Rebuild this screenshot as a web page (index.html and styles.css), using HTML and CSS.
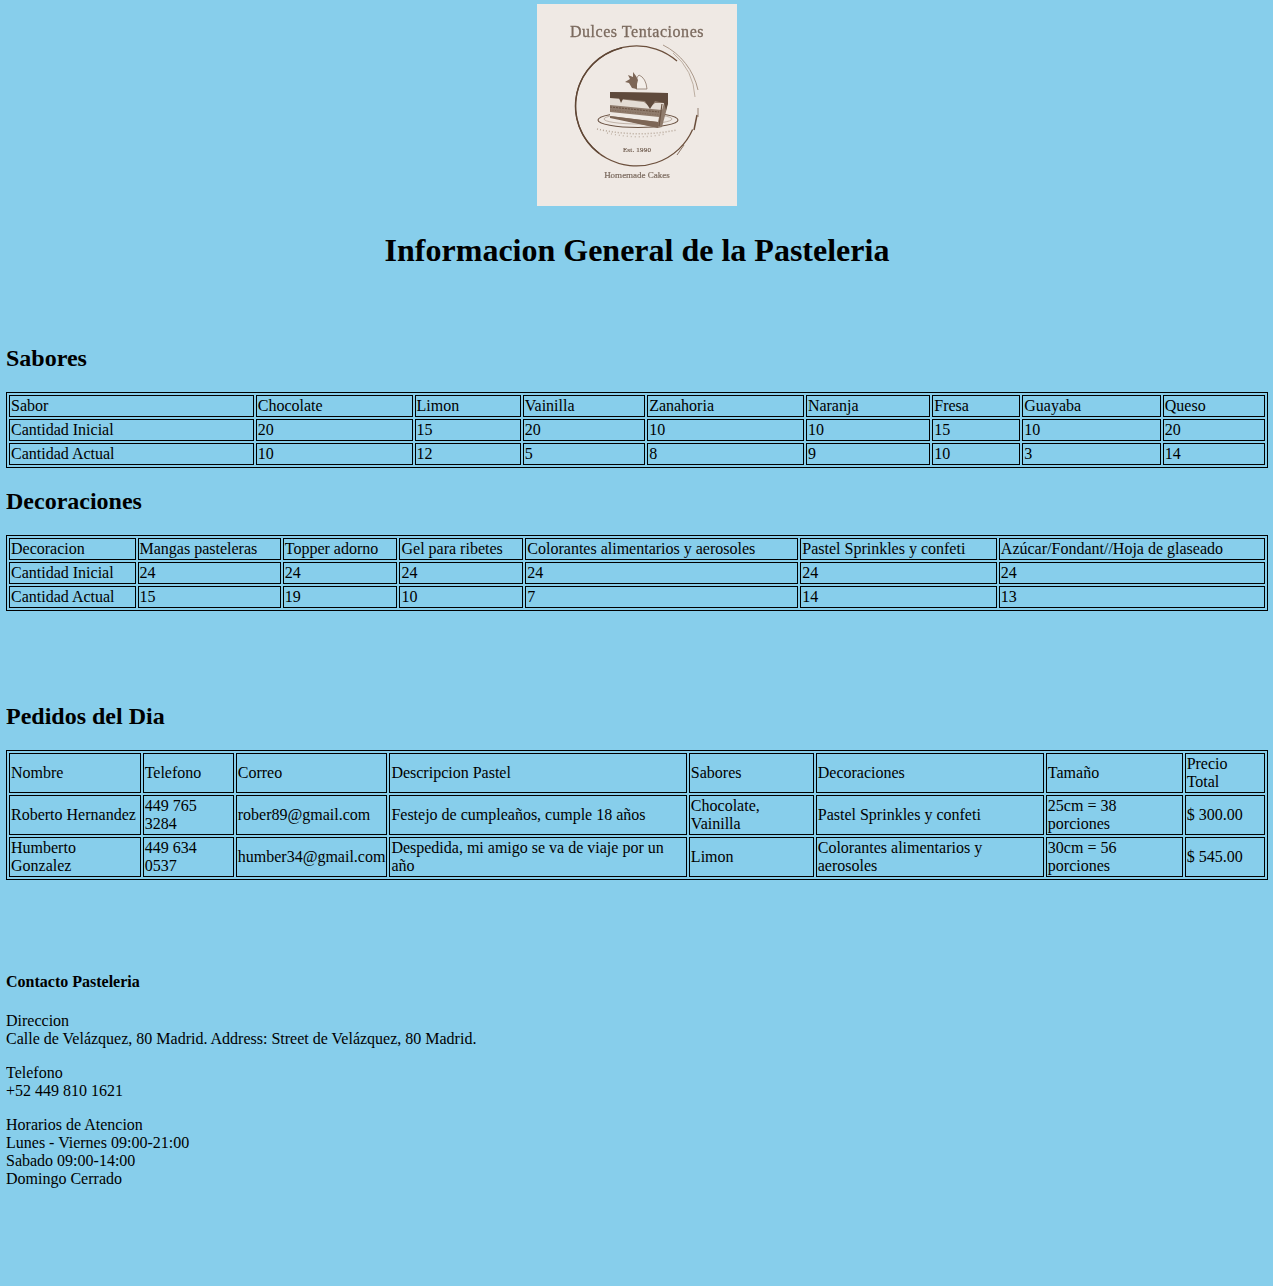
FILE: index.html
```html
<!DOCTYPE html>
<html>
<head>
	<title>Informacion General de la Pasteleria</title>
	<link rel="stylesheet" href="styles.css">
</head>
<body>
	<div class="logo-box">
		<svg class="logo" viewBox="0 0 200 202" width="200" height="202">
			<rect width="200" height="202" fill="#efe9e4"/>
			<text class="logo-title" x="100" y="33" text-anchor="middle">Dulces Tentaciones</text>
			<!-- ring -->
			<path d="M140 57.1 A61 60 0 1 0 155.6 125.5" fill="none" stroke="#6b4f3c" stroke-width="1.3"/>
			<path d="M85 43.7 A61 60 0 0 0 62 149.3" fill="none" stroke="#5f4635" stroke-width="1.4"/>
			<path d="M126 41 A66 66 0 0 1 161 86" fill="none" stroke="#a08d7e" stroke-width="0.9"/>
			<path d="M136 49 A62 62 0 0 1 158 93" fill="none" stroke="#b0a090" stroke-width="0.8"/>
			<path d="M161 104 L161 113" fill="none" stroke="#8a7464" stroke-width="0.9"/>
			<path d="M160 111 L157 126" fill="none" stroke="#6b4f3c" stroke-width="1.5"/>
			<path d="M147 141 L140 151" fill="none" stroke="#8a7464" stroke-width="1"/>
			<!-- plate -->
			<ellipse cx="101" cy="116" rx="40" ry="7.5" fill="#efe9e4" stroke="#6b5343" stroke-width="1.1"/>
			<ellipse cx="101" cy="115" rx="34" ry="5" fill="none" stroke="#a08d7e" stroke-width="0.6"/>
			<!-- crumbs under the plate -->
			<path d="M60 125 Q100 134 140 126" fill="none" stroke="#b5a698" stroke-width="1.5" stroke-dasharray="1 2"/>
			<path d="M70 129 Q100 136 128 130" fill="none" stroke="#c2b5a9" stroke-width="1.4" stroke-dasharray="1 3"/>
			<!-- cake -->
			<path d="M73 88 L131 89 L130 104 L125 123 L121 124 L73 113 Z" fill="#8f7b6c"/>
			<path d="M73 94 L107 98 L113 103 L118 99 L127 99 L125 106 L73 101 Z" fill="#e4dcd4"/>
			<path d="M73 108 L122 113 L121 118 L73 112 Z" fill="#efe9e4"/>
			<path d="M73 112 L121 118 L121 124 L73 114 Z" fill="#7d6656"/>
			<path d="M73 88 L131 89 L131 100 L129 106 L127 99 L118 97 L113 105 L108 97 L86 95 L84 99 L82 94 L73 94 Z" fill="#5f4a3c"/>
			<path d="M73 103 L122 108" fill="none" stroke="#6b5343" stroke-width="1" stroke-dasharray="2 1"/>
			<path d="M73 106 L122 111" fill="none" stroke="#7d6656" stroke-width="0.8" stroke-dasharray="1 1.5"/>
			<path d="M125 100 L122 122" fill="none" stroke="#6b5343" stroke-width="1.2"/>
			<!-- strawberry -->
			<path d="M99 85 Q98 74 102 71 Q109 74 110 85 Z" fill="#f3eee9" stroke="#7d6656" stroke-width="0.7"/>
			<path d="M100 85 L95 84 L92 79 L88 78 L93 75 L91 71 L96 73 L96 68 L99 72 L101 76 L100 80 Z" fill="#7d6656"/>
			<text class="logo-est" x="100" y="148" text-anchor="middle">Est. 1990</text>
			<text class="logo-sub" x="100" y="174" text-anchor="middle">Homemade Cakes</text>
		</svg>
	</div>

	<h1>Informacion General de la Pasteleria</h1>

	<h2 class="first-section">Sabores</h2>
	<table>
		<tr><td>Sabor</td><td>Chocolate</td><td>Limon</td><td>Vainilla</td><td>Zanahoria</td><td>Naranja</td><td>Fresa</td><td>Guayaba</td><td>Queso</td></tr>
		<tr><td>Cantidad Inicial</td><td>20</td><td>15</td><td>20</td><td>10</td><td>10</td><td>15</td><td>10</td><td>20</td></tr>
		<tr><td>Cantidad Actual</td><td>10</td><td>12</td><td>5</td><td>8</td><td>9</td><td>10</td><td>3</td><td>14</td></tr>
	</table>

	<h2>Decoraciones</h2>
	<table>
		<tr><td>Decoracion</td><td>Mangas pasteleras</td><td>Topper adorno</td><td>Gel para ribetes</td><td>Colorantes alimentarios y aerosoles</td><td>Pastel Sprinkles y confeti</td><td>Azúcar/Fondant//Hoja de glaseado</td></tr>
		<tr><td>Cantidad Inicial</td><td>24</td><td>24</td><td>24</td><td>24</td><td>24</td><td>24</td></tr>
		<tr><td>Cantidad Actual</td><td>15</td><td>19</td><td>10</td><td>7</td><td>14</td><td>13</td></tr>
	</table>

	<h2 class="orders">Pedidos del Dia</h2>
	<table>
		<tr><td>Nombre</td><td>Telefono</td><td>Correo</td><td>Descripcion Pastel</td><td>Sabores</td><td>Decoraciones</td><td>Tamaño</td><td>Precio Total</td></tr>
		<tr><td>Roberto Hernandez</td><td>449 765 3284</td><td>rober89@gmail.com</td><td>Festejo de cumpleaños, cumple 18 años</td><td>Chocolate, Vainilla</td><td>Pastel Sprinkles y confeti</td><td>25cm = 38 porciones</td><td>$ 300.00</td></tr>
		<tr><td>Humberto Gonzalez</td><td>449 634 0537</td><td>humber34@gmail.com</td><td>Despedida, mi amigo se va de viaje por un año</td><td>Limon</td><td>Colorantes alimentarios y aerosoles</td><td>30cm = 56 porciones</td><td>$ 545.00</td></tr>
	</table>

	<div class="contact">
		<p class="contact-title"><b>Contacto Pasteleria</b></p>
		<p>Direccion<br>Calle de Velázquez, 80 Madrid. Address: Street de Velázquez, 80 Madrid.</p>
		<p>Telefono<br>+52 449 810 1621</p>
		<p>Horarios de Atencion<br>Lunes - Viernes 09:00-21:00<br>Sabado 09:00-14:00<br>Domingo Cerrado</p>
	</div>
</body>
</html>
```

FILE: styles.css
```css
html {
	background-color: #87ceeb;
}

body {
	margin: 4px 5px 98px 6px;
	font-family: "Liberation Serif", "Times New Roman", serif;
	font-size: 16px;
	color: #000;
}

.logo-box {
	text-align: center;
}

.logo {
	display: block;
	margin: 0 auto;
	filter: blur(0.5px);
}

.logo-title {
	font-family: "Liberation Serif", serif;
	font-size: 16px;
	letter-spacing: 0.55px;
	stroke: #7b6a5e;
	stroke-width: 0.3px;
	fill: #7b6a5e;
}

.logo-est {
	font-family: "Liberation Serif", serif;
	font-size: 7px;
	letter-spacing: 0.2px;
	stroke: #6b5749;
	stroke-width: 0.15px;
	fill: #6b5749;
}

.logo-sub {
	font-family: "Liberation Serif", serif;
	font-size: 9px;
	stroke: #7b6a5e;
	stroke-width: 0.2px;
	fill: #7b6a5e;
}

h1 {
	font-size: 32px;
	text-align: center;
	margin: 26px 0 20px;
}

h2 {
	font-size: 24px;
	margin: 20px 0;
}

.first-section {
	margin-top: 76px;
}

.orders {
	margin-top: 92px;
}

table {
	width: 100%;
	border: 1px solid #000;
	border-spacing: 2px;
}

td {
	border: 1px solid #000;
	padding: 1px;
}

.contact {
	margin-top: 93px;
}

.contact p {
	margin: 16px 0;
}

.contact .contact-title {
	margin: 0 0 21px;
}
```
